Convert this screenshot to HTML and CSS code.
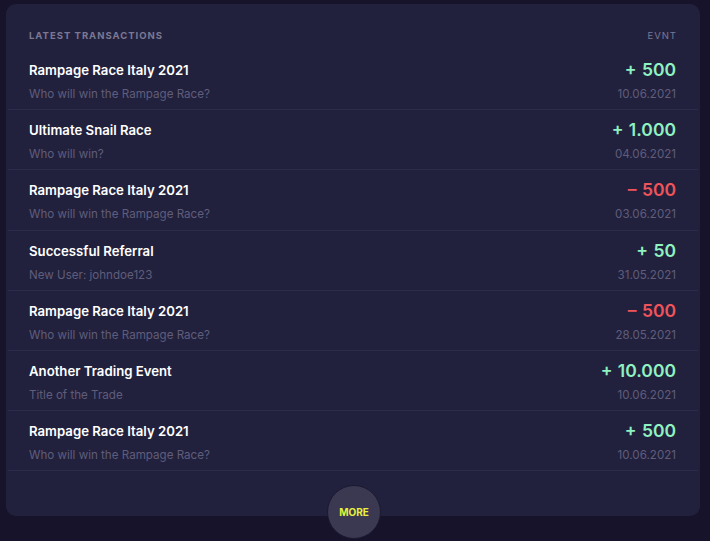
FILE: index.html
```html
<!DOCTYPE html>
<html>
<head>
<meta charset="utf-8">
<link rel="stylesheet" href="styles.css">
</head>
<body>
<div class="card">
  <div class="head">
    <span>LATEST TRANSACTIONS</span>
    <span>EVNT</span>
  </div>
  <ul class="list">
    <li class="row"><div class="l"><div class="t">Rampage Race Italy 2021</div><div class="s">Who will win the Rampage Race?</div></div><div class="r"><div class="a pos">+ 500</div><div class="s">10.06.2021</div></div></li>
    <li class="row"><div class="l"><div class="t">Ultimate Snail Race</div><div class="s">Who will win?</div></div><div class="r"><div class="a pos">+ 1.000</div><div class="s">04.06.2021</div></div></li>
    <li class="row"><div class="l"><div class="t">Rampage Race Italy 2021</div><div class="s">Who will win the Rampage Race?</div></div><div class="r"><div class="a neg">– 500</div><div class="s">03.06.2021</div></div></li>
    <li class="row"><div class="l"><div class="t">Successful Referral</div><div class="s">New User: johndoe123</div></div><div class="r"><div class="a pos">+ 50</div><div class="s">31.05.2021</div></div></li>
    <li class="row"><div class="l"><div class="t">Rampage Race Italy 2021</div><div class="s">Who will win the Rampage Race?</div></div><div class="r"><div class="a neg">– 500</div><div class="s">28.05.2021</div></div></li>
    <li class="row"><div class="l"><div class="t">Another Trading Event</div><div class="s">Title of the Trade</div></div><div class="r"><div class="a pos">+ 10.000</div><div class="s">10.06.2021</div></div></li>
    <li class="row"><div class="l"><div class="t">Rampage Race Italy 2021</div><div class="s">Who will win the Rampage Race?</div></div><div class="r"><div class="a pos">+ 500</div><div class="s">10.06.2021</div></div></li>
  </ul>
  <button class="more">MORE</button>
</div>
</body>
</html>
```
FILE: styles.css
```css
* { box-sizing: border-box; }
html, body { margin: 0; padding: 0; }
body {
  background: #16132a;
  font-family: "Inter", "Noto Sans", sans-serif;
  width: 710px;
  height: 541px;
  overflow: hidden;
  padding: 4px 10px 0 6px;
}
.card {
  position: relative;
  background: #22213d;
  border-radius: 10px;
  height: 512px;
  padding-top: 24px;
}
.head {
  display: flex;
  justify-content: space-between;
  padding: 0 23px;
  margin-bottom: 6px;
  font-size: 9.5px;
  letter-spacing: 1px;
  color: #7a7893;
  height: 16px;
  line-height: 16px;
}
.head span:first-child { font-weight: 700; }
.head span:last-child { font-weight: 400; }
.list {
  list-style: none;
  margin: 0 2px;
  padding: 0;
}
.row {
  display: flex;
  justify-content: space-between;
  height: 60.2px;
  border-bottom: 1.5px solid #2c2b49;
  padding: 10px 22px 0 21px;
}
.t {
  color: #ffffff;
  font-size: 13.2px;
  font-weight: 600;
  line-height: 20px;
}
.s {
  color: #5f5d7b;
  font-size: 11.6px;
  line-height: 16px;
  margin-top: 6px;
}
.r { text-align: right; }
.a {
  font-size: 17.5px;
  font-weight: 600;
  line-height: 20px;
  word-spacing: 1px;
}
.pos { color: #8ef2c1; }
.neg { color: #f0545a; }
.more {
  position: absolute;
  left: 321px;
  top: 481px;
  width: 54px;
  height: 54px;
  border-radius: 50%;
  border: 1px solid #1b1930;
  background: #3b3952;
  color: #e7f23c;
  font-family: "Inter", "Noto Sans", sans-serif;
  font-size: 10px;
  font-weight: 700;
  padding: 0;
  cursor: pointer;
}
```
